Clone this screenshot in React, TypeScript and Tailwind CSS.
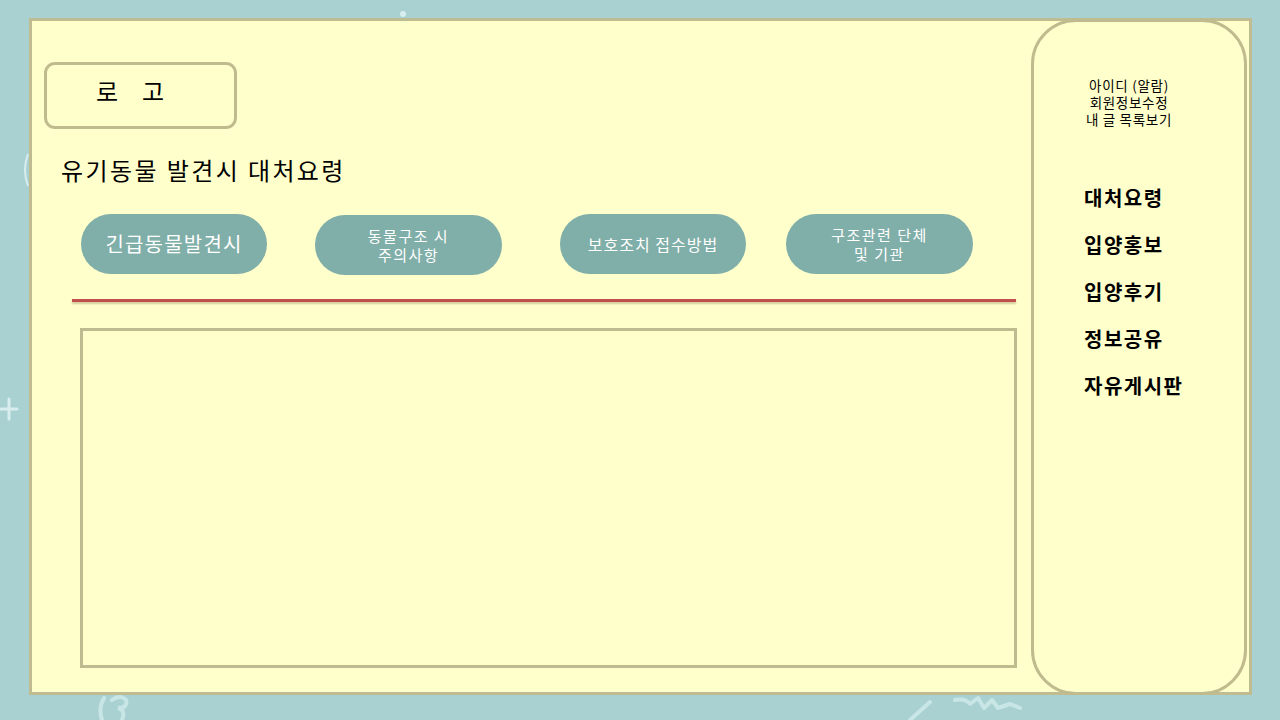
import React from "react"

const font = { fontFamily: '"Noto Sans CJK KR", "Noto Sans", sans-serif' }

const menus = ["대처요령", "입양홍보", "입양후기", "정보공유", "자유게시판"]

const Decorations = () => (
	<>
		<svg className="absolute left-[0px] top-[395px]" width="20" height="28" viewBox="0 0 20 28">
			<path d="M9 4 L9 24 M1 14 L17 14" stroke="#d8eeee" strokeWidth="3" strokeLinecap="round" fill="none" />
		</svg>
		<svg className="absolute left-[397px] top-[8px]" width="12" height="12" viewBox="0 0 12 12">
			<circle cx="6" cy="6" r="3" fill="#d8eeee" />
		</svg>
		<svg className="absolute left-[20px] top-[150px]" width="12" height="40" viewBox="0 0 12 40">
			<path d="M8 4 Q2 20 8 36" stroke="#d8eeee" strokeWidth="2" fill="none" />
		</svg>
		<svg className="absolute left-[90px] top-[694px]" width="60" height="26" viewBox="0 0 60 26">
			<path d="M14 4 Q8 14 12 26 M22 6 Q30 0 36 6 Q38 14 28 14 Q36 16 32 26" stroke="#c8e6e6" strokeWidth="4" fill="none" strokeLinecap="round" />
		</svg>
		<svg className="absolute left-[900px] top-[694px]" width="140" height="26" viewBox="0 0 140 26">
			<path d="M30 8 L10 26" stroke="#c8e6e6" strokeWidth="4" fill="none" strokeLinecap="round" />
			<path d="M55 6 Q65 4 70 10 L78 4 L84 14 L92 6 L98 14 L110 10 L120 14" stroke="#c8e6e6" strokeWidth="4" fill="none" strokeLinecap="round" strokeLinejoin="round" />
		</svg>
	</>
)

const App: React.FC = () => {
	return (
		<div className="relative w-[1280px] h-[720px] bg-[#aad1d1] pt-[18px] pl-[29px] overflow-hidden" style={font}>
			<Decorations />
			<div className="relative flex w-[1223px] h-[677px] bg-[#ffffcc] border-[3px] border-[#bfbc91]">
				{/* main column */}
				<div className="w-[999px] flex flex-col">
					<div className="ml-[12px] mt-[41px] w-[193px] h-[67px] border-[3px] border-[#c0bb8f] rounded-[11px] flex items-center pl-[49px] pb-[9px]">
						<span className="text-[24px] text-black tracking-[24px] leading-none">로고</span>
					</div>
					<div className="ml-[29px] mt-[25px] text-[24px] leading-[32px] tracking-[2.4px] text-black">유기동물 발견시 대처요령</div>
					<div className="flex mt-[28px]">
						<div className="ml-[49px] w-[186px] h-[60px] rounded-full bg-[#80aea8] flex items-center justify-center text-white text-[20px] tracking-[1.2px]">
							긴급동물발견시
						</div>
						<div className="ml-[48px] mt-[1px] w-[187px] h-[60px] rounded-full bg-[#80aea8] flex flex-col items-center justify-center text-white text-[15px] tracking-[1.5px]">
							<div className="h-[19px] leading-[19px]">동물구조 시</div>
							<div className="h-[19px] leading-[19px]">주의사항</div>
						</div>
						<div className="ml-[58px] w-[186px] h-[60px] rounded-full bg-[#80aea8] flex items-center justify-center text-white text-[16px] tracking-[1px]">
							보호조치 접수방법
						</div>
						<div className="ml-[40px] w-[187px] h-[60px] rounded-full bg-[#80aea8] flex flex-col items-center justify-center text-white text-[15px] tracking-[1.5px]">
							<div className="h-[19px] leading-[19px]">구조관련 단체</div>
							<div className="h-[19px] leading-[19px]">및 기관</div>
						</div>
					</div>
					<div className="ml-[40px] mt-[24px] w-[944px] h-[3px] bg-[#c0504d] shadow-[0_2px_2px_rgba(120,110,60,0.35)]" />
					<div className="ml-[48px] mt-[26px] w-[937px] h-[340px] border-[3px] border-[#bfbb90]" />
				</div>
				{/* sidebar */}
				<div className="-mt-[2px] w-[216px] h-[676px] border-[3px] border-[#c0bb8f] rounded-[45px] bg-[#ffffcc] flex flex-col">
					<div className="mt-[55px] pr-[20px] flex flex-col items-center text-[13.5px] tracking-[0.7px] text-black">
						<div className="h-[17px] leading-[17px]">아이디 (알람)</div>
						<div className="h-[17px] leading-[17px]">회원정보수정</div>
						<div className="h-[17px] leading-[17px]">내 글 목록보기</div>
					</div>
					<div className="mt-[56px] pl-[50px] flex flex-col gap-[19px]">
						{menus.map((m) => (
							<div key={m} className="text-[20px] leading-[28px] font-bold tracking-[1.5px] text-black">
								{m}
							</div>
						))}
					</div>
				</div>
			</div>
		</div>
	)
}

export default App
